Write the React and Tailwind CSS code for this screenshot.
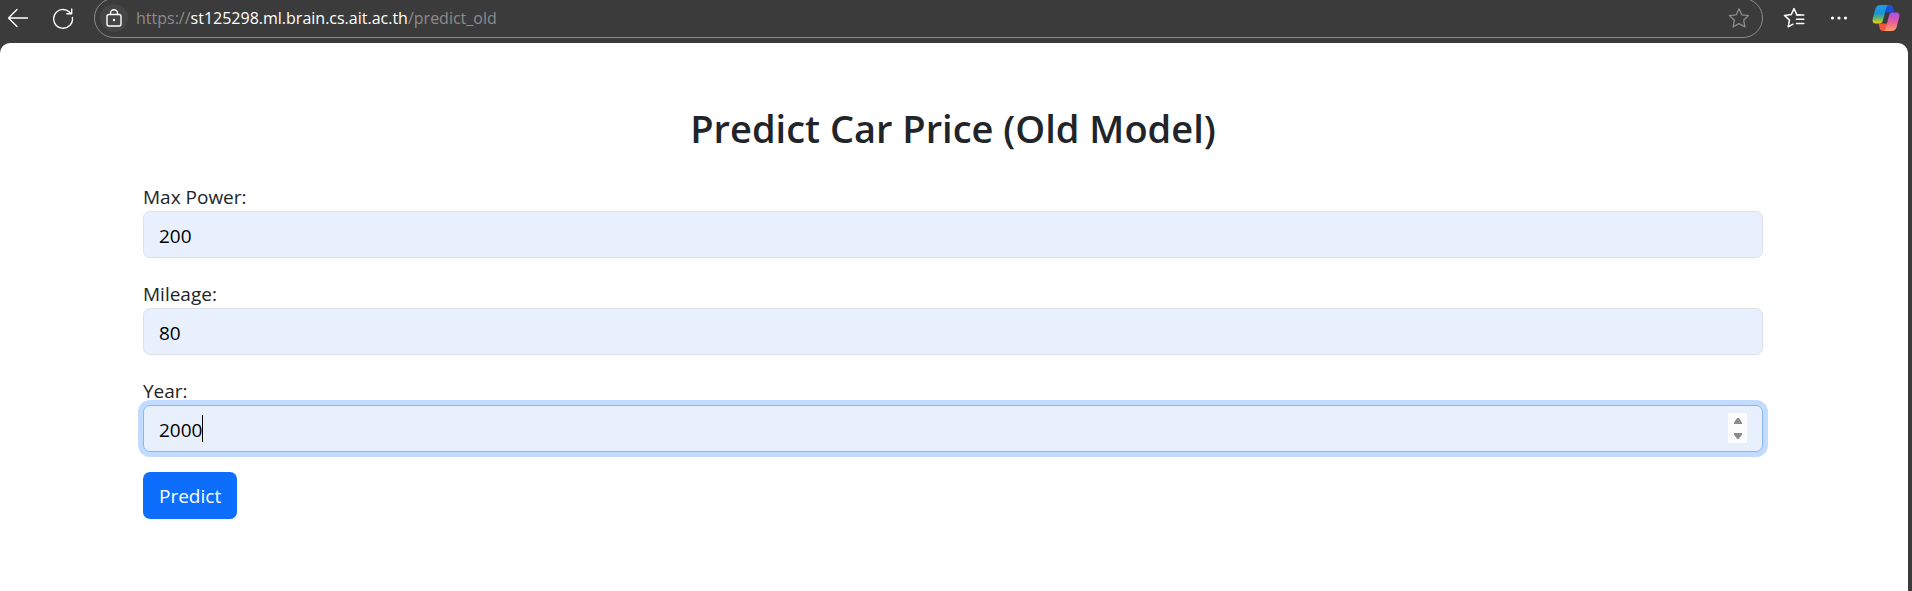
import { useState } from "react";

function BackIcon() {
  return (
    <svg className="size-6" viewBox="0 0 24 24" fill="none" stroke="currentColor" strokeWidth="1.3" strokeLinecap="round" strokeLinejoin="round" aria-hidden="true">
      <path d="M21.500 12H2.500M11 3.500L2.500 12l8.500 8.500" />
    </svg>
  );
}

function ReloadIcon() {
  return (
    <svg className="size-6" viewBox="0 0 24 24" fill="none" stroke="currentColor" strokeWidth="1.4" strokeLinecap="round" strokeLinejoin="round" aria-hidden="true">
      <path d="M21.400 11.500a9.400 9.400 0 1 1-3-5.600l1.800 1.600M20.700 3v4.800h-4.900" />
    </svg>
  );
}

function LockIcon() {
  return (
    <svg className="size-5" viewBox="0 0 20 20" fill="none" stroke="currentColor" strokeWidth="1.4" aria-hidden="true">
      <rect x="3" y="6.500" width="14" height="11.500" rx="2" />
      <path d="M6.500 6.500V5.200a3.500 3.500 0 0 1 7 0v1.300" />
      <circle cx="10" cy="12" r="1.200" fill="currentColor" stroke="none" />
    </svg>
  );
}

function StarIcon() {
  return (
    <svg className="size-6" viewBox="0 0 24 24" fill="none" stroke="currentColor" strokeWidth="1.300" strokeLinejoin="round" aria-hidden="true">
      <path d="M12 2.800l2.800 6 6.800.8-5 4.600 1.300 6.700L12 17.600l-5.900 3.300 1.300-6.700-5-4.600 6.800-.8z" />
    </svg>
  );
}

function FavoritesIcon() {
  return (
    <svg className="size-6" viewBox="0 0 24 24" fill="none" stroke="currentColor" strokeWidth="1.500" strokeLinecap="round" strokeLinejoin="round" aria-hidden="true">
      <path d="M18 8.800l-3.300-.4L12 2.600 9.200 8.600l-6.700.8 5 4.700-1.300 6.700 4.800-2.600" />
      <path d="M14.500 9h7.300M14.500 13.300h7.300M14.500 17.600h7.300" />
    </svg>
  );
}

function DotsIcon() {
  return (
    <svg className="size-5" viewBox="0 0 20 20" fill="currentColor" aria-hidden="true">
      <circle cx="3.500" cy="10" r="1.600" />
      <circle cx="10" cy="10" r="1.600" />
      <circle cx="16.500" cy="10" r="1.600" />
    </svg>
  );
}

function CopilotIcon() {
  return (
    <svg className="size-7" viewBox="0 0 28 28" aria-hidden="true">
      <defs>
        <linearGradient id="cp-left" x1="0" y1="0" x2="0" y2="1">
          <stop offset="0" stopColor="#18a0ee" />
          <stop offset="0.45" stopColor="#1c93d4" />
          <stop offset="0.7" stopColor="#5cb56c" />
          <stop offset="1" stopColor="#f2cc0c" />
        </linearGradient>
        <linearGradient id="cp-right" x1="0" y1="0" x2="0" y2="1">
          <stop offset="0" stopColor="#a350ec" />
          <stop offset="0.5" stopColor="#ea5a9c" />
          <stop offset="1" stopColor="#ff9c62" />
        </linearGradient>
      </defs>
      <path d="M12 1h6c2 0 2.700 1 3.200 3l1.300 4.500h-8z" fill="#1c50da" />
      <path d="M17 27h-6c-2 0-2.900-1-3.400-3L6.500 19.500h8z" fill="#f0583c" />
      <path d="M8.500 1h8c-1.600.5-1.900 1.800-2.400 3.500l-3 11.500c-.7 2.500-1.700 3.500-3.900 3.500H3.500c-2.500 0-3.500-1.800-2.800-4.500L3.300 5C4.100 2.300 5.700 1 8.500 1z" fill="url(#cp-left)" />
      <path d="M19.500 27h-8c1.600-.5 1.900-1.800 2.400-3.500l3-11.500c.7-2.500 1.700-3.500 3.900-3.500h3.700c2.500 0 3.500 1.800 2.800 4.500L24.700 23c-.8 2.700-2.400 4-5.200 4z" fill="url(#cp-right)" />
    </svg>
  );
}

function BrowserBar() {
  return (
    <header className="flex h-[43px] items-start gap-[19px] pl-1.5 pr-3 text-white">
      <div className="flex h-[35px] items-center gap-[21px]">
        <button type="button" aria-label="Back"><BackIcon /></button>
        <button type="button" aria-label="Reload"><ReloadIcon /></button>
      </div>
      <div className="-mt-0.5 flex h-10 flex-1 items-center rounded-full border border-[#8c8c8c] px-[5px]">
        <button type="button" aria-label="Site information" className="flex size-7 items-center justify-center rounded-full bg-[#454545]">
          <LockIcon />
        </button>
        <p className="flex-1 pl-2 text-[16px] leading-6 text-[#8c8c8c]">
          https://<span className="text-white">st125298.ml.brain.cs.ait.ac.th</span>/predict_old
        </p>
        <button type="button" aria-label="Add to favorites" className="mr-1.5 text-[#8c8c8c]"><StarIcon /></button>
      </div>
      <div className="flex h-[35px] items-center gap-[23px]">
        <button type="button" aria-label="Favorites"><FavoritesIcon /></button>
        <button type="button" aria-label="Settings and more"><DotsIcon /></button>
        <button type="button" aria-label="Copilot"><CopilotIcon /></button>
      </div>
    </header>
  );
}

const labelClass = "block pt-0.5 text-[19px] leading-7";
const inputClass =
  "block h-[47px] w-full rounded-[7px] border bg-[#e8f0fe] px-[15px] pt-0.5 text-[19px] text-black outline-none";

function Field({ id, label, value, onChange }) {
  return (
    <div>
      <label htmlFor={id} className={labelClass}>{label}</label>
      <input id={id} type="text" value={value} onChange={(e) => onChange(e.target.value)} className={`${inputClass} border-[#dee2e6]`} />
    </div>
  );
}

function YearField({ value, onChange }) {
  const step = (d) => onChange(String(Number(value) + d));
  return (
    <div>
      <label htmlFor="year" className={labelClass}>Year:</label>
      <div className="relative">
        <input
          id="year"
          type="text"
          inputMode="numeric"
          value={value}
          onChange={(e) => onChange(e.target.value)}
          className={`${inputClass} border-[#86b7fe] ring-5 ring-[#c2dbfe]`}
        />
        <span className="absolute left-[59px] top-2.5 h-[27px] w-px bg-black" aria-hidden="true" />
        <div className="absolute right-4 top-2 flex h-[30px] w-[19px] flex-col bg-[#fcfcfc] text-[#8b8b8b]">
          <button type="button" aria-label="Increase year" onClick={() => step(1)} className="flex flex-1 items-center justify-center">
            <svg className="h-1.5 w-2" viewBox="0 0 8 6" fill="currentColor"><path d="M3.200 0h1.600L8 4.500V6H0V4.500z" /></svg>
          </button>
          <button type="button" aria-label="Decrease year" onClick={() => step(-1)} className="flex flex-1 items-center justify-center">
            <svg className="h-1.5 w-2" viewBox="0 0 8 6" fill="currentColor"><path d="M3.200 6h1.600L8 1.500V0H0v1.500z" /></svg>
          </button>
        </div>
      </div>
    </div>
  );
}

export default function App() {
  const [power, setPower] = useState("200");
  const [mileage, setMileage] = useState("80");
  const [year, setYear] = useState("2000");

  return (
    <div className="flex min-h-screen flex-col bg-[#3b3b3b] font-['Open_Sans','Noto_Sans',sans-serif]">
      <BrowserBar />
      <main className="mr-1 flex-1 rounded-t-[10px] bg-white pl-6 pr-[26px] pt-[61px] text-[#212529]">
        <div className="mx-auto max-w-[1620px]">
          <h1 className="mb-[29px] text-center text-[38px] font-semibold leading-[48px]">Predict Car Price (Old Model)</h1>
          <form className="flex flex-col items-stretch gap-5" onSubmit={(e) => e.preventDefault()}>
            <Field id="max-power" label="Max Power:" value={power} onChange={setPower} />
            <Field id="mileage" label="Mileage:" value={mileage} onChange={setMileage} />
            <YearField value={year} onChange={setYear} />
            <button type="submit" className="h-[47px] self-start rounded-[7px] bg-[#0d6efd] px-4 pt-0.5 text-[19px] text-white">Predict</button>
          </form>
        </div>
      </main>
    </div>
  );
}
